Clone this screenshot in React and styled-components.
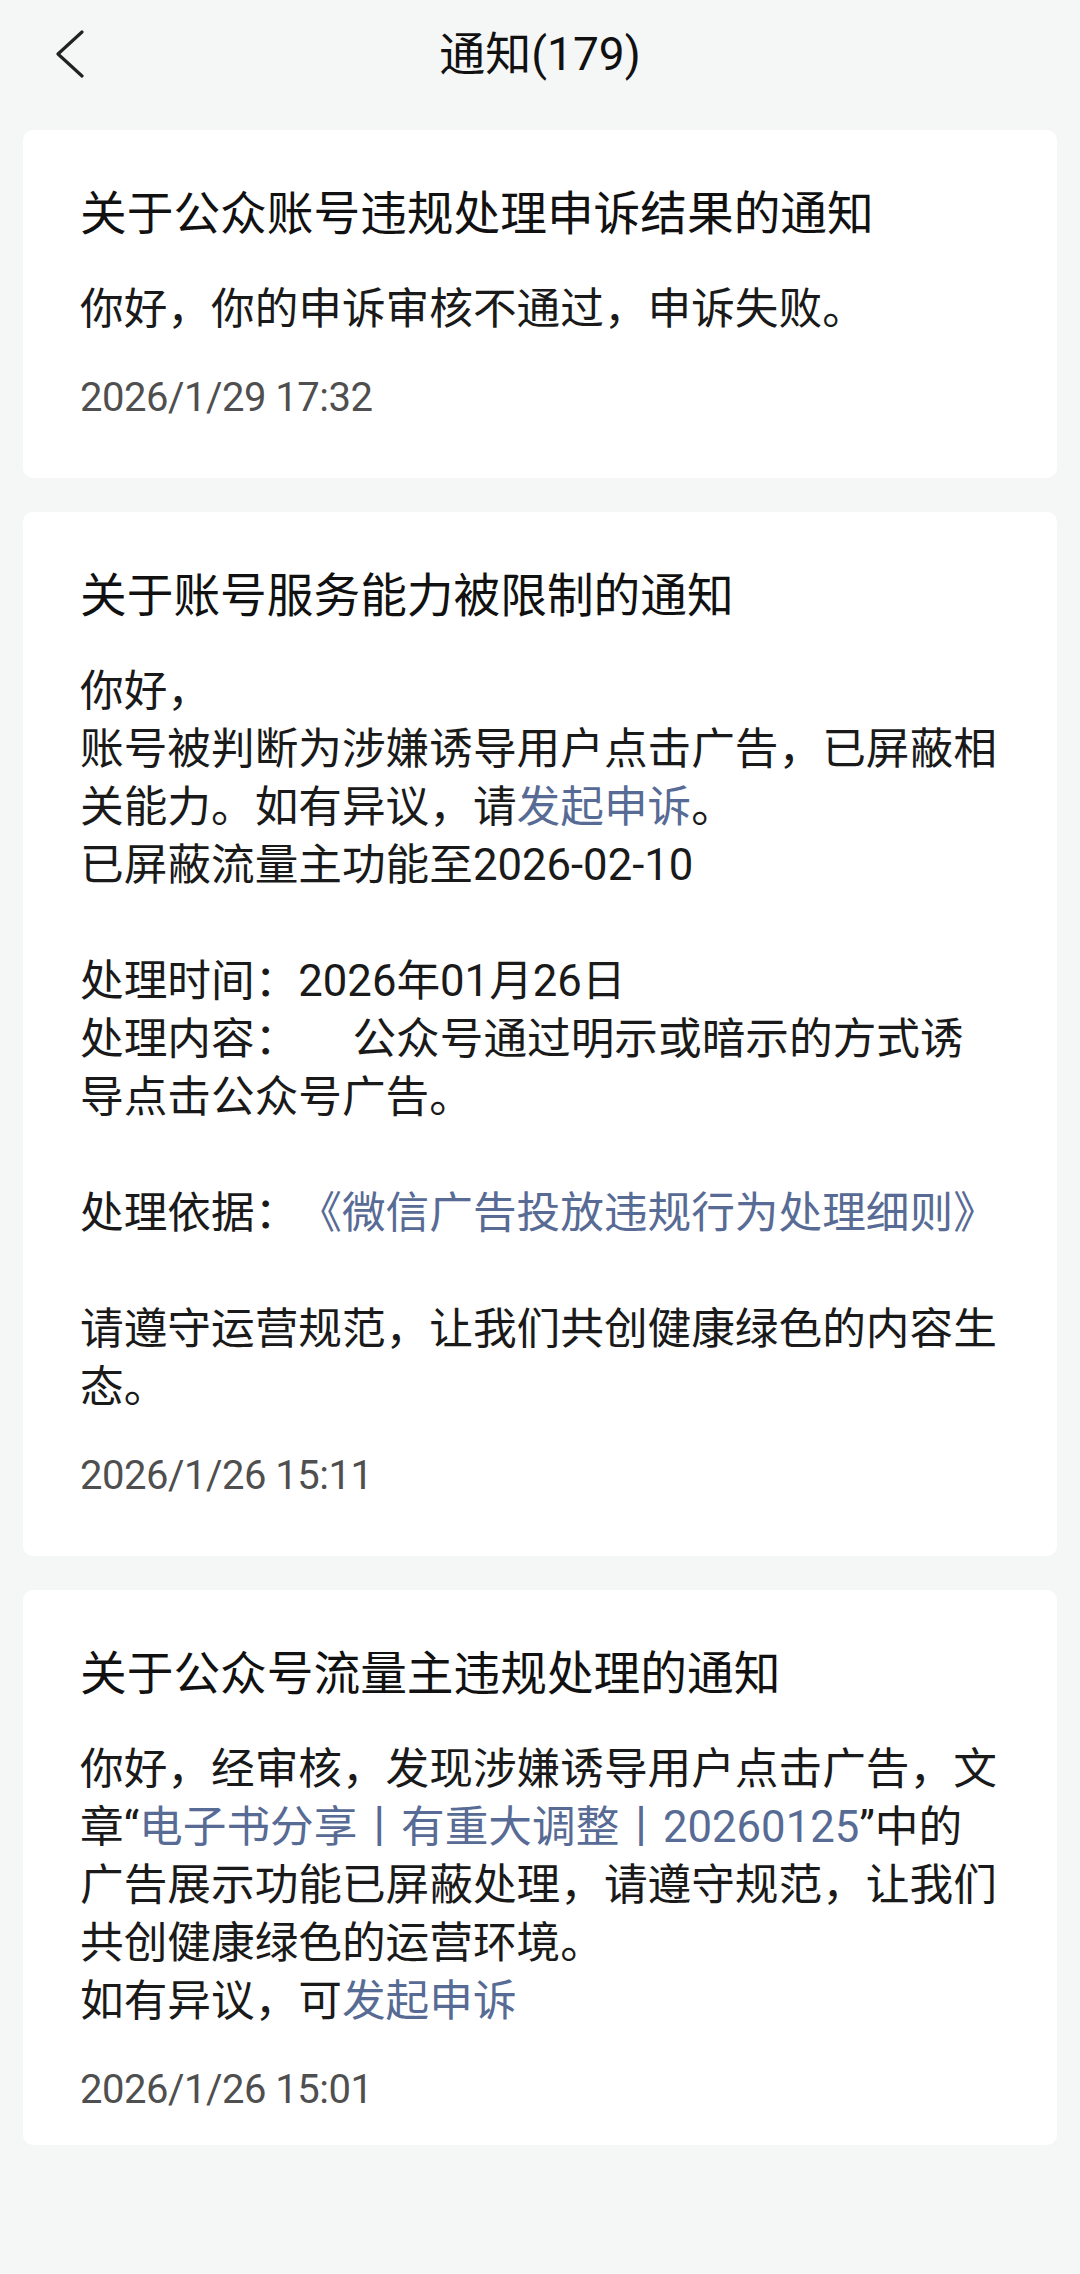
import styled, { createGlobalStyle } from "styled-components";

const GlobalStyle = createGlobalStyle`
  html, body {
    margin: 0;
    padding: 0;
    background: #f5f6f6;
  }
  body {
    font-family: Roboto, "Noto Sans CJK SC", sans-serif;
    -webkit-font-smoothing: antialiased;
    text-spacing-trim: space-all;
  }
`

const Page = styled.div`
  width: 1080px;
  min-height: 2274px;
  background: #f5f6f6;
`
const Header = styled.header`
  height: 108px;
  display: grid;
  grid-template-columns: 160px 1fr 160px;
  align-items: center;
`
const BackButton = styled.button`
  border: 0;
  background: none;
  padding: 0 0 0 55px;
  height: 100%;
  display: flex;
  align-items: center;
  cursor: pointer;
`
const Title = styled.h1`
  margin: 0;
  text-align: center;
  font-size: 46px;
  font-weight: 400;
  line-height: 108px;
  color: #111111;
`
const List = styled.main`
  display: flex;
  flex-direction: column;
  gap: 34px;
  padding: 22px 23px 0;
`
const Card = styled.article`
  background: #ffffff;
  border-radius: 10px;
  padding: 53px 57px ${p => (p.$last ? 30 : 55)}px;
`
const CardTitle = styled.h2`
  margin: 0;
  font-size: 46.7px;
  font-weight: 400;
  line-height: 62px;
  color: #111111;
`
const Body = styled.p`
  margin: 35px 0 0;
  font-size: 43.67px;
  line-height: 58px;
  color: #1a1a1a;
  white-space: pre-wrap;
  text-spacing-trim: space-all;
`
const Link = styled.a`
  color: #576b95;
  text-decoration: none;
`
const Time = styled.time`
  display: block;
  margin-top: 35px;
  font-size: 40px;
  line-height: 50px;
  letter-spacing: -0.5px;
  color: #4f4f4f;
`

const BackIcon = () => (
    <svg width="30" height="48" viewBox="0 0 30 48" fill="none">
        <polyline points="27,2 3,24 27,46" stroke="#222" strokeWidth="3.2" strokeLinecap="round"
                  strokeLinejoin="round"/>
    </svg>
)

const notices = [
    {
        title: '关于公众账号违规处理申诉结果的通知',
        body: <>你好，你的申诉审核不通过，申诉失败。</>,
        time: '2026/1/29 17:32',
    },
    {
        title: '关于账号服务能力被限制的通知',
        body: <>
            {'你好，\n账号被判断为涉嫌诱导用户点击广告，已屏蔽相关能力。如有异议，请'}
            <Link>发起申诉</Link>
            {'。\n已屏蔽流量主功能至2026-02-10\n\n处理时间：2026年01月26日\n处理内容：     公众号通过明示或暗示的方式诱导点击公众号广告。\n\n处理依据：'}
            <Link>《微信广告投放违规行为处理细则》</Link>
            {'\n\n请遵守运营规范，让我们共创健康绿色的内容生态。'}
        </>,
        time: '2026/1/26 15:11',
    },
    {
        title: '关于公众号流量主违规处理的通知',
        body: <>
            {'你好，经审核，发现涉嫌诱导用户点击广告，文章“'}
            <Link>电子书分享丨有重大调整丨20260125</Link>
            {'”中的广告展示功能已屏蔽处理，请遵守规范，让我们共创健康绿色的运营环境。\n如有异议，可'}
            <Link>发起申诉</Link>
        </>,
        time: '2026/1/26 15:01',
    },
]

export default function App() {
    return (
        <Page>
            <GlobalStyle/>
            <Header>
                <BackButton aria-label="返回"><BackIcon/></BackButton>
                <Title>通知(179)</Title>
                <span/>
            </Header>
            <List>
                {notices.map((n, i) => (
                    <Card key={n.time + i} $last={i === notices.length - 1}>
                        <CardTitle>{n.title}</CardTitle>
                        <Body>{n.body}</Body>
                        <Time>{n.time}</Time>
                    </Card>
                ))}
            </List>
        </Page>
    )
}
